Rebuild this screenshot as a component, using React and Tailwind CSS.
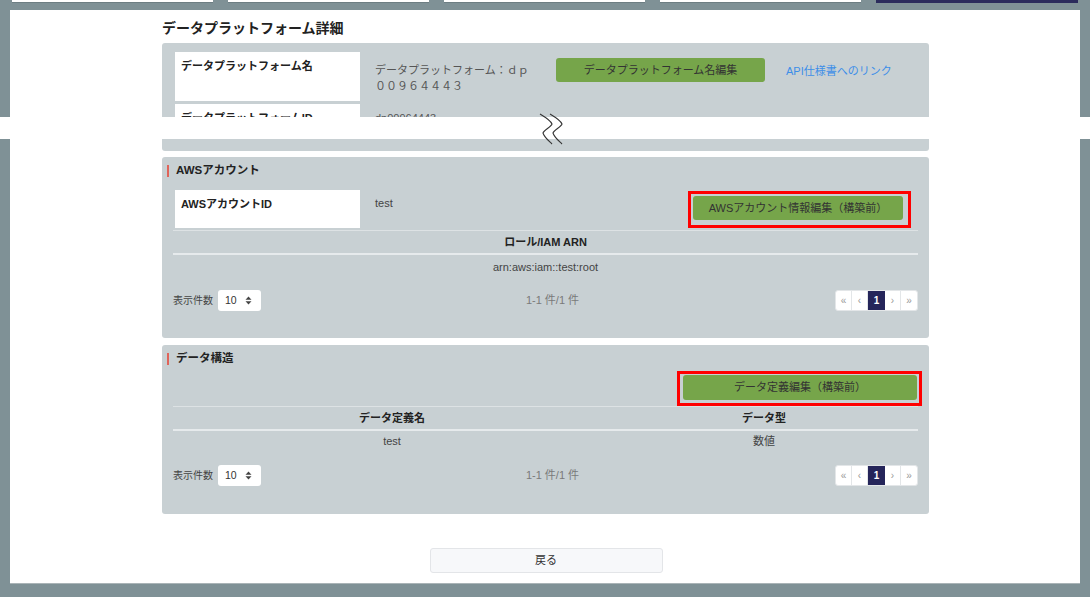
const font = { fontFamily: '"Liberation Sans", "Noto Sans CJK JP", sans-serif' };

const TopTabs = () => (
  <div className="flex h-[3px] gap-[15px] pl-[12px]">
    {[0, 1, 2, 3].map((i) => (
      <div key={i} className="w-[201px] h-full bg-white border-b border-[#6d7e83]" />
    ))}
    <div className="w-[202px] h-full bg-[#2b2b5c]" />
  </div>
);

const SectionTitle = ({ children }) => (
  <div className="flex items-center h-[12px] pl-[5px]">
    <span className="w-[2px] h-[12px] bg-[#e0645a] mr-[7px]" />
    <span className="text-[11.5px] font-bold text-[#222]">{children}</span>
  </div>
);

const LabelBox = ({ children, h }) => (
  <div className={`w-[185px] bg-white px-[6px] pt-[6px] text-[11px] font-bold text-[#222] leading-[16px] ${h}`}>
    {children}
  </div>
);

const SortIcon = () => (
  <svg width="7" height="9" viewBox="0 0 7 9">
    <path d="M3.5 0.5 L6.5 3.8 L0.5 3.8 Z M3.5 8.5 L6.5 5.2 L0.5 5.2 Z" fill="#444" />
  </svg>
);

const Footer = () => (
  <div className="flex items-center h-[21px] px-[11px]">
    <div className="w-[290px] flex items-center">
      <span className="text-[10px] text-[#444] mr-[5px]">表示件数</span>
      <div className="w-[43px] h-[21px] bg-white rounded-[3px] flex items-center justify-between pl-[7px] pr-[9px] text-[10.5px] text-[#333]">
        <span>10</span>
        <SortIcon />
      </div>
    </div>
    <div className="flex-1 text-center text-[11px] text-[#7a7a7a] pl-[14px]">1-1 件/1 件</div>
    <div className="w-[290px] flex justify-end">
      <div className="flex h-[21px] bg-white rounded-[3px] border border-[#e3e6e8] text-[10px]">
        <span className="w-[16px] flex items-center justify-center text-[#999] border-r border-[#e3e6e8]">«</span>
        <span className="w-[16px] flex items-center justify-center text-[#999] border-r border-[#e3e6e8]">‹</span>
        <span className="w-[17px] flex items-center justify-center bg-[#25255a] text-white font-bold">1</span>
        <span className="w-[16px] flex items-center justify-center text-[#999] border-r border-[#e3e6e8]">›</span>
        <span className="w-[16px] flex items-center justify-center text-[#999]">»</span>
      </div>
    </div>
  </div>
);

const GreenButton = ({ children, w, h }) => (
  <div className={`bg-[#76a54a] rounded-[3px] flex items-center justify-center text-[11px] text-[#333] ${w} ${h}`}>
    {children}
  </div>
);

export default function App() {
  return (
    <div className="relative w-[1090px] h-[597px] bg-[#7f9196] overflow-hidden" style={font}>
      <TopTabs />
      <div className="mx-[10px] mt-[7px] h-[574px] bg-white border-b border-[#aab4b7] pt-[8px] pl-[152px]">
        <div className="w-[767px]">
          <h1 className="h-[20px] leading-[20px] text-[14px] font-bold text-[#222] mb-[5px]">
            データプラットフォーム詳細
          </h1>

          {/* 基本情報 */}
          <div className="bg-[#c8d0d3] rounded-[3px] px-[13px] pt-[9px] pb-[12px]">
            <div className="flex">
              <LabelBox h="h-[49px]">データプラットフォーム名</LabelBox>
              <div className="w-[158px] ml-[15px] mt-[10px] text-[11px] leading-[16px] text-[#555]">
                データプラットフォーム：ｄｐ００９６４４４３
              </div>
              <div className="ml-[23px] mt-[6px]">
                <GreenButton w="w-[209px]" h="h-[24px]">データプラットフォーム名編集</GreenButton>
              </div>
              <a className="ml-[21px] mt-[11px] text-[11px] text-[#3d8ee8]">API仕様書へのリンク</a>
            </div>
            <div className="flex mt-[3px]">
              <LabelBox h="h-[35px]">データプラットフォームID</LabelBox>
              <div className="ml-[15px] mt-[6px] text-[11px] text-[#555]">dp00964443</div>
            </div>
          </div>

          {/* AWSアカウント */}
          <div className="mt-[6px] bg-[#c8d0d3] rounded-[3px] pt-[8px] pb-[27px] h-[181px]">
            <SectionTitle>AWSアカウント</SectionTitle>
            <div className="flex mt-[13px] px-[13px]">
              <LabelBox h="h-[38px]">AWSアカウントID</LabelBox>
              <div className="ml-[15px] mt-[5px] text-[11px] text-[#444]">test</div>
              <div className="relative ml-auto mr-[13px] mt-[6px] h-[24px]">
                <GreenButton w="w-[210px]" h="h-[24px]">AWSアカウント情報編集（構築前）</GreenButton>
                <div className="absolute -left-[5px] -top-[5px] -right-[8px] -bottom-[8px] border-[3px] border-[#ff0000]" />
              </div>
            </div>
            <div className="mx-[11px] mt-[2px] border-t border-[#dde2e4]">
              <div className="h-[22px] flex items-center justify-center text-[11px] font-bold text-[#222]">
                ロール/IAM ARN
              </div>
              <div className="h-[2px] bg-[#e6eaec]" />
              <div className="h-[24px] flex items-center justify-center text-[11px] text-[#444]">
                arn:aws:iam::test:root
              </div>
            </div>
            <div className="mt-[11px]">
              <Footer />
            </div>
          </div>

          {/* データ構造 */}
          <div className="mt-[7px] bg-[#c8d0d3] rounded-[3px] pt-[8px] h-[169px]">
            <SectionTitle>データ構造</SectionTitle>
            <div className="flex justify-end px-[12px] mt-[10px]">
              <div className="relative">
                <GreenButton w="w-[234px]" h="h-[25px]">データ定義編集（構築前）</GreenButton>
                <div className="absolute -left-[6px] -top-[4px] -right-[5px] -bottom-[6px] border-[3px] border-[#ff0000]" />
              </div>
            </div>
            <div className="mx-[11px] mt-[6px] border-t border-[#dde2e4]">
              <div className="grid grid-cols-[438px_306px] h-[22px] items-center text-[11px] font-bold text-[#222]">
                <div className="text-center">データ定義名</div>
                <div className="text-center">データ型</div>
              </div>
              <div className="h-[2px] bg-[#e6eaec]" />
              <div className="grid grid-cols-[438px_306px] h-[21px] items-center text-[11px] text-[#444]">
                <div className="text-center">test</div>
                <div className="text-center">数値</div>
              </div>
            </div>
            <div className="mt-[13px]">
              <Footer />
            </div>
          </div>

          <div className="flex justify-center mt-[34px]">
            <button className="w-[233px] h-[25px] ml-[1px] bg-[#f7f8fa] border border-[#e3e5e8] rounded-[3px] text-[11px] text-[#333]">
              戻る
            </button>
          </div>
        </div>
      </div>

      {/* 省略の区切り */}
      <div className="absolute left-0 right-0 top-[117px] h-[22px] bg-white" />
      <svg className="absolute left-[535px] top-[110px]" width="35" height="38" viewBox="0 0 35 38">
        <path d="M5 4 C10 7 16 11 17 14 C16 17 9 20 8 23 C9 27 14 31 17 34" fill="none" stroke="#333" strokeWidth="1.1" />
        <path d="M15 4 C20 7 26 11 27 14 C26 17 19 20 18 23 C19 27 24 31 27 34" fill="none" stroke="#333" strokeWidth="1.1" />
      </svg>
    </div>
  );
}
